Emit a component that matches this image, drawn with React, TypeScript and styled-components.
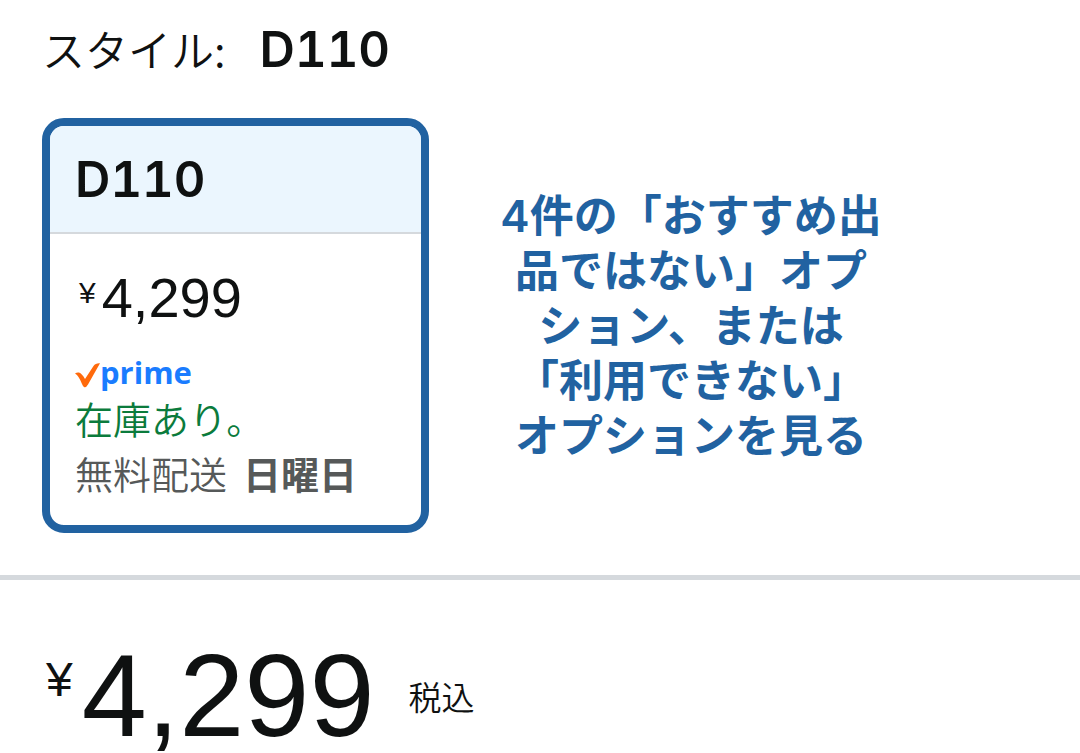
import React from "react";
import styled, { createGlobalStyle } from "styled-components";

const GlobalStyle = createGlobalStyle`
  *, *::before, *::after { box-sizing: border-box; }
  body {
    margin: 0;
    background: #ffffff;
    color: #0f1111;
    font-family: "Liberation Sans", "Noto Sans CJK JP", sans-serif;
  }
`;

const Page = styled.main`
  width: 100%;
  min-height: 100vh;
`;

const StyleSection = styled.section`
  padding: 15px 42px 42px;
  border-bottom: 5px solid #d5d9dd;
`;

const StyleLabel = styled.h2`
  display: flex;
  align-items: baseline;
  gap: 34px;
  margin: 0 0 35px;
  font-family: "Noto Sans CJK JP", sans-serif;
  font-size: 43px;
  font-weight: 350;
  line-height: 66px;
`;

const ModelName = styled.strong`
  font-family: Inter, "Noto Sans CJK JP", sans-serif;
  font-size: 49px;
  font-weight: 600;
  line-height: 66px;
  font-variant-numeric: tabular-nums;
`;

const Options = styled.div`
  display: flex;
  align-items: center;
  gap: 65px;
`;

const OptionCard = styled.button`
  display: flex;
  flex-direction: column;
  flex: 0 1 387px;
  padding: 0;
  overflow: hidden;
  border: 8px solid #2162a1;
  border-radius: 22px;
  background: #ffffff;
  color: inherit;
  font-family: inherit;
  text-align: left;
  cursor: pointer;
`;

const CardHeader = styled.span`
  display: flex;
  padding: 21px 25px 19px;
  border-bottom: 2px solid #d5d9dd;
  background: #ebf6fe;
`;

const CardBody = styled.span`
  display: flex;
  flex-direction: column;
  padding: 31px 25px 25px;
`;

const Price = styled.span<{ $large?: boolean }>`
  display: flex;
  align-items: flex-start;
  gap: ${(p) => (p.$large ? 9 : 6)}px;
  padding-left: 4px;
  font-size: ${(p) => (p.$large ? 117 : 56)}px;
  line-height: ${(p) => (p.$large ? 112 : 66)}px;
`;

const Yen = styled.span<{ $large?: boolean }>`
  font-size: ${(p) => (p.$large ? 48 : 30)}px;
  line-height: ${(p) => (p.$large ? 80 : 56)}px;
`;

const PrimeBadge = styled.span`
  display: flex;
  align-items: center;
  height: 36px;
  margin-top: 23px;
  color: #1a7cff;
  font-family: "Open Sans", sans-serif;
  font-size: 31px;
  font-weight: 700;
  line-height: 32px;
`;

const CheckMark = styled.svg`
  width: 25px;
  height: 25px;
  margin-top: 6px;
`;

const InfoLine = styled.span<{ $tone: string }>`
  display: flex;
  gap: 16px;
  color: ${(p) => p.$tone};
  font-family: "Noto Sans CJK JP", sans-serif;
  font-size: 38px;
  font-weight: 350;
  line-height: 55px;
`;

const DeliveryDay = styled.b`
  font-weight: 700;
`;

const MoreLink = styled.a`
  flex: 0 1 394px;
  padding-top: 2px;
  color: #2162a1;
  font-family: Inter, "Noto Sans CJK JP", sans-serif;
  font-size: 44px;
  font-weight: 600;
  line-height: 55px;
  text-align: center;
  text-decoration: none;
`;

const Quoted = styled.span`
  white-space: nowrap;
`;

const PriceSection = styled.section`
  display: flex;
  align-items: center;
  gap: 34px;
  padding: 60px 42px 24px;
`;

const TaxNote = styled.span`
  font-family: "Noto Sans CJK JP", sans-serif;
  font-size: 33px;
  font-weight: 350;
  line-height: 48px;
`;

export default function App() {
  return (
    <Page lang="ja">
      <GlobalStyle />
      <StyleSection>
        <StyleLabel>
          <span>スタイル:</span>
          <ModelName>D110</ModelName>
        </StyleLabel>
        <Options>
          <OptionCard type="button" aria-pressed="true">
            <CardHeader>
              <ModelName>D110</ModelName>
            </CardHeader>
            <CardBody>
              <Price>
                <Yen>¥</Yen>
                <span>4,299</span>
              </Price>
              <PrimeBadge>
                <CheckMark viewBox="0 0 25 25" aria-hidden="true">
                  <path
                    d="M0 10.500Q2 9 4 9.500Q7 10.500 10 16L18.500 3Q20.500 0 25 0.300L13 21.500Q11 25 9 24Q8 23.500 7 21Q4 13 0 10.500Z"
                    fill="#ff6a0c"
                  />
                </CheckMark>
                <span>prime</span>
              </PrimeBadge>
              <InfoLine $tone="#0b7b3c">在庫あり。</InfoLine>
              <InfoLine $tone="#565959">
                <span>無料配送</span>
                <DeliveryDay>日曜日</DeliveryDay>
              </InfoLine>
            </CardBody>
          </OptionCard>
          <MoreLink href="#options">
            4件の「おすすめ出品ではない」オプション、または
            <Quoted>「利用できない」</Quoted>オプションを見る
          </MoreLink>
        </Options>
      </StyleSection>
      <PriceSection>
        <Price $large>
          <Yen $large>¥</Yen>
          <span>4,299</span>
        </Price>
        <TaxNote>税込</TaxNote>
      </PriceSection>
    </Page>
  );
}
